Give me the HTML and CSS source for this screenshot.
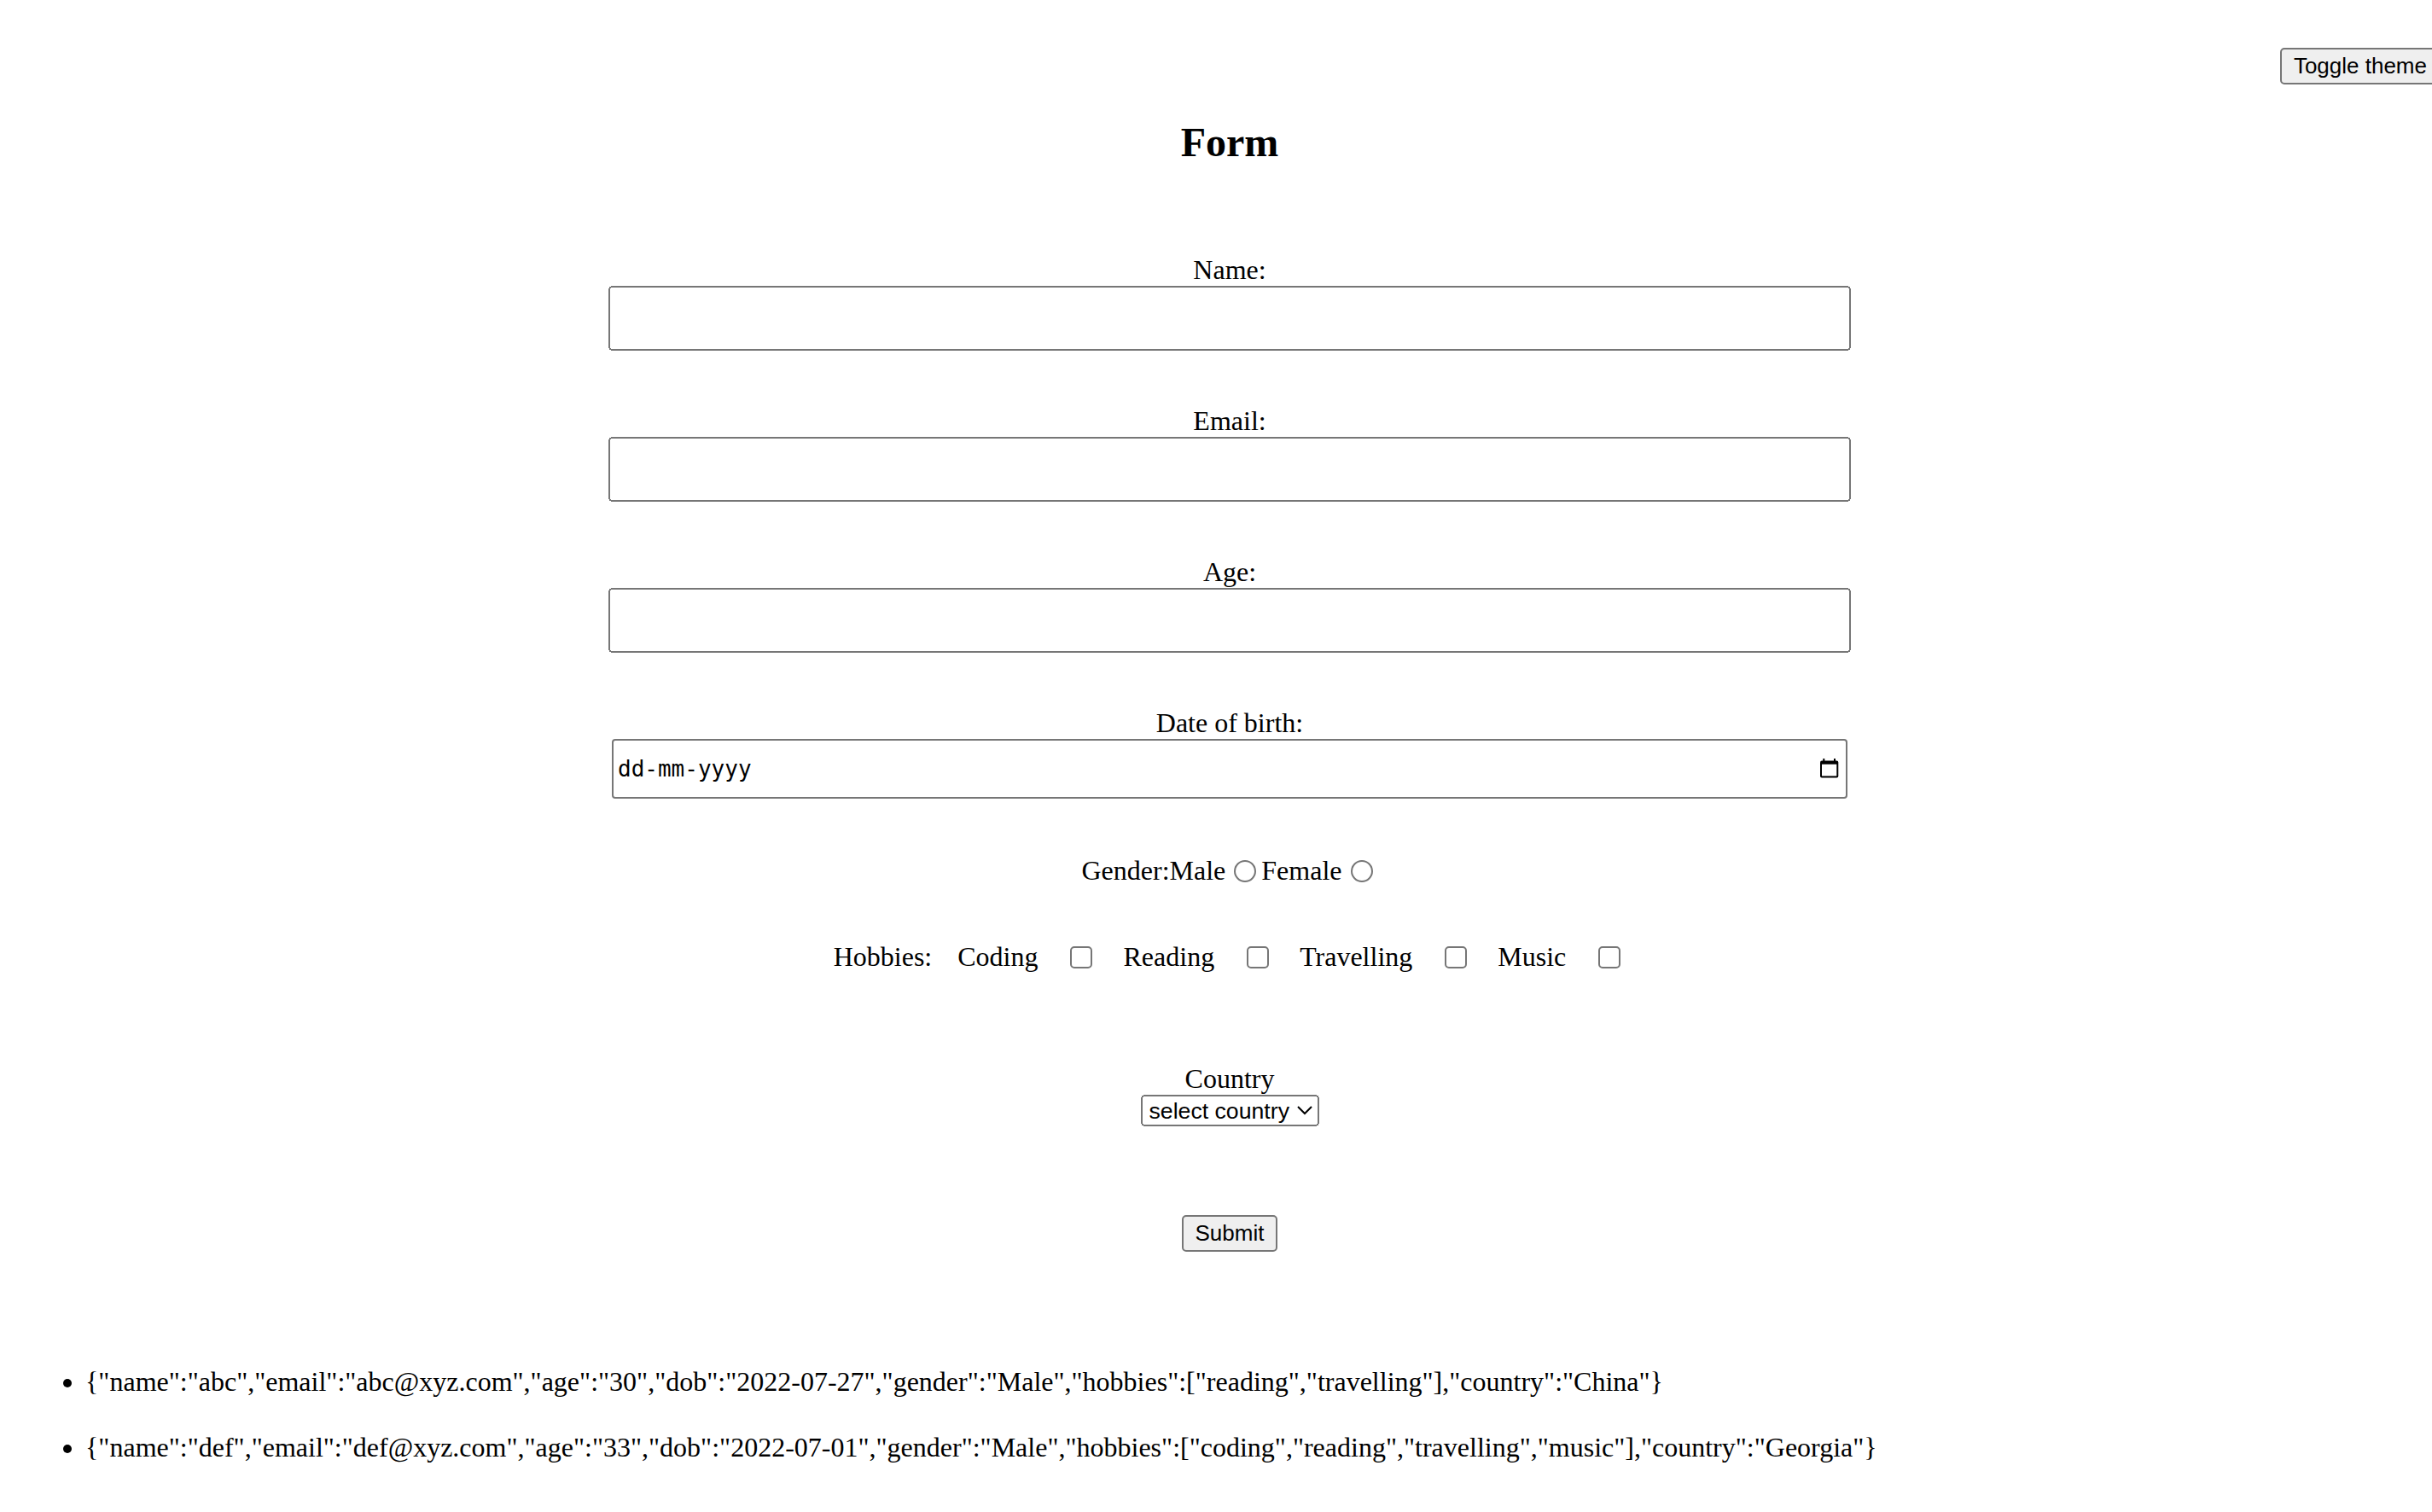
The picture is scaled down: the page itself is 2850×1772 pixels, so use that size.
FILE: index.html
```html
<!DOCTYPE html>
<html lang="en">
<head>
<meta charset="utf-8">
<title>Form</title>
<link rel="stylesheet" href="styles.css">
</head>
<body>
<div class="page">
<div class="app">
  <div class="topbar"><button type="button" class="theme-btn">Toggle theme</button></div>
  <h2 class="title">Form</h2>
  <form class="form">
    <div class="field"><label class="field-label" for="name">Name:</label><input id="name" type="text" class="text-input"></div>
    <div class="field"><label class="field-label" for="email">Email:</label><input id="email" type="email" class="text-input"></div>
    <div class="field"><label class="field-label" for="age">Age:</label><input id="age" type="number" class="text-input"></div>
    <div class="field field-date">
      <label class="field-label" for="dob">Date of birth:</label>
      <div class="date-box">
        <input id="dob" type="text" class="date-text" placeholder="dd-mm-yyyy">
        <svg class="cal-icon" viewBox="0 0 22 23" aria-hidden="true">
          <rect x="3.3" y="0" width="2" height="3.4" fill="#000"/>
          <rect x="16" y="0" width="2" height="3.4" fill="#000"/>
          <rect x="0" y="2.4" width="21.3" height="20" rx="2" fill="#000"/>
          <rect x="2" y="6.7" width="17.3" height="13.7" fill="#fff"/>
        </svg>
      </div>
    </div>
    <div class="gender"><span class="row-text">Gender:</span><label class="row-text" for="male">Male</label><input id="male" type="radio" name="gender" class="radio"><label class="row-text" for="female">Female</label><input id="female" type="radio" name="gender" class="radio"></div>
    <div class="hobbies"><span class="row-text">Hobbies:</span><label class="row-text" for="h1">Coding</label><input id="h1" type="checkbox" class="hobby-check"><label class="row-text" for="h2">Reading</label><input id="h2" type="checkbox" class="hobby-check"><label class="row-text" for="h3">Travelling</label><input id="h3" type="checkbox" class="hobby-check"><label class="row-text" for="h4">Music</label><input id="h4" type="checkbox" class="hobby-check"></div>
    <div class="field field-country"><label class="field-label" for="country">Country</label><select id="country" class="country-select"><option>select country</option></select></div>
    <div class="submit-row"><button type="submit" class="submit-btn">Submit</button></div>
  </form>
  <ul class="entries">
    <li class="entry">{"name":"abc","email":"abc@xyz.com","age":"30","dob":"2022-07-27","gender":"Male","hobbies":["reading","travelling"],"country":"China"}</li>
    <li class="entry">{"name":"def","email":"def@xyz.com","age":"33","dob":"2022-07-01","gender":"Male","hobbies":["coding","reading","travelling","music"],"country":"Georgia"}</li>
  </ul>
</div>
</div>
</body>
</html>
```

FILE: styles.css
```css
html {
  zoom: 2;
  overflow: hidden;
  background: #ffffff;
}

body {
  margin: 8px 0 0 8px;
  font-family: "Liberation Serif", "Times New Roman", serif;
  font-size: 16px;
  color: #000000;
}

.page {
  overflow: hidden;
}

.app {
  width: 1425px;
}

.topbar {
  display: flex;
  justify-content: flex-end;
  padding-top: 20px;
  padding-right: 3px;
}

.theme-btn,
.submit-btn {
  font-family: "Liberation Sans", Arial, sans-serif;
  font-size: 13px;
}

.title {
  margin: 0.83em 0;
  font-size: 24px;
  font-weight: bold;
  text-align: center;
}

.form {
  display: flex;
  flex-direction: column;
  text-align: center;
  padding-top: 32px;
}

.field {
  display: flex;
  flex-direction: column;
  align-items: center;
  margin-bottom: 32px;
}

.field-label {
  display: block;
}

.text-input {
  display: block;
  box-sizing: border-box;
  width: 728px;
  height: 38px;
  margin: 0;
  font-family: "Liberation Sans", Arial, sans-serif;
  font-size: 13.333px;
}

.field-date {
  margin-bottom: 33px;
}

.date-box {
  display: flex;
  align-items: center;
  box-sizing: border-box;
  width: 724px;
  height: 35px;
  padding: 0 4px 0 2.5px;
  border: 1px solid #767676;
  border-radius: 2px;
  background: #ffffff;
}

.date-text {
  flex: 1;
  min-width: 0;
  margin: 0;
  padding: 0;
  border: none;
  outline: none;
  background: transparent;
  font-family: "DejaVu Sans Mono", monospace;
  font-size: 13px;
  color: #000000;
}

.date-text::placeholder {
  color: #000000;
  opacity: 1;
}

.cal-icon {
  flex: none;
  width: 11px;
  height: 11.5px;
}

.gender {
  display: flex;
  justify-content: center;
  align-items: flex-start;
  margin-bottom: 32px;
}

.radio {
  margin: 3px 3px 0 5px;
}

.hobbies {
  display: flex;
  justify-content: center;
  align-items: flex-start;
  gap: 15px;
  margin-bottom: 52.5px;
}

.hobby-check {
  margin: 3px 3px 3px 4px;
}

.field-country {
  margin-bottom: 52px;
}

.country-select {
  box-sizing: border-box;
  height: 18.5px;
  margin: 0;
  font-family: "Liberation Sans", Arial, sans-serif;
  font-size: 13.333px;
}

.submit-row {
  display: flex;
  justify-content: center;
}

.entries {
  margin: 57px 0 0;
  padding-left: 42px;
}

.entry {
  padding: 10px 0;
}
```
